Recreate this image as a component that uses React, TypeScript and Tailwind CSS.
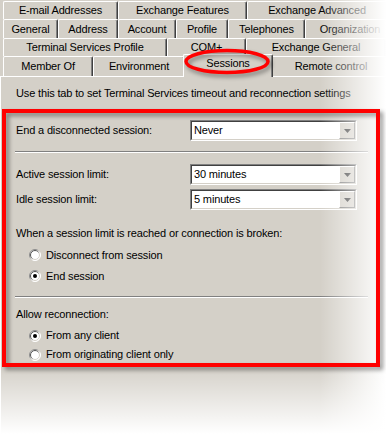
import React from "react";

function Tab({ w, label, selected }: { w: number; label: string; selected?: boolean }) {
  if (selected) {
    return (
      <div
        style={{ width: w }}
        className="relative z-[5] -mx-[2px] -mt-[2px] h-[23px] shrink-0 flex items-start justify-center pt-[2px] rounded-t-[2px] border-t border-l border-white border-r border-r-[#404040] bg-[#d4d0c8] shadow-[inset_-1px_0_0_#808080]"
      >
        {label}
      </div>
    );
  }
  return (
    <div
      style={{ width: w }}
      className="h-full shrink-0 flex items-center justify-center rounded-t-[2px] border-t border-l border-white border-r border-r-[#404040] bg-[#d4d0c8] shadow-[inset_-1px_0_0_#808080] whitespace-nowrap overflow-hidden"
    >
      {label}
    </div>
  );
}

function Dropdown({ value }: { value: string }) {
  return (
    <div className="w-[167px] h-[21px] border border-t-[#808080] border-l-[#808080] border-b-white border-r-white">
      <div className="h-full flex items-center bg-white border border-t-[#404040] border-l-[#404040] border-b-[#d4d0c8] border-r-[#d4d0c8]">
        <span className="flex-1 pl-[2px]">{value}</span>
        <div className="w-[16px] h-[17px] flex items-center justify-center bg-[#d4d0c8] border border-t-white border-l-white border-b-[#808080] border-r-[#808080]">
          <svg width="7" height="4" viewBox="0 0 7 4">
            <path d="M0 0h7L3.5 4z" fill="#333" />
          </svg>
        </div>
      </div>
    </div>
  );
}

function Radio({ checked, label }: { checked?: boolean; label: string }) {
  return (
    <div className="flex items-center h-full pl-[27px]">
      <svg width="12" height="12" viewBox="0 0 12 12" className="shrink-0">
        <defs>
          <linearGradient id="ro" x1="0" y1="0" x2="1" y2="1">
            <stop offset="0.35" stopColor="#8a8a8a" />
            <stop offset="0.65" stopColor="#ffffff" />
          </linearGradient>
          <linearGradient id="ri" x1="0" y1="0" x2="1" y2="1">
            <stop offset="0.35" stopColor="#505050" />
            <stop offset="0.65" stopColor="#d4d0c8" />
          </linearGradient>
        </defs>
        <circle cx="6" cy="6" r="5.5" fill="white" stroke="url(#ro)" strokeWidth="1" />
        <circle cx="6" cy="6" r="4.5" fill="white" stroke="url(#ri)" strokeWidth="1" />
        {checked && <circle cx="6" cy="6" r="2" fill="#000" />}
      </svg>
      <span className="ml-[5px]">{label}</span>
    </div>
  );
}

function Separator() {
  return <div className="ml-[13px] w-[353px] h-[2px] border-t border-[#808080] border-b border-b-white" />;
}

export default function App() {
  return (
    <div className="relative w-[386px] h-[434px] overflow-hidden bg-[#d4d0c8] text-[11px] leading-[13px] tracking-[-0.15px] text-black font-['Liberation_Sans',Arial,sans-serif]">
      {/* tab rows */}
      <div className="pt-[1px] pl-[3px]">
        <div className="flex h-[18px]">
          <Tab w={115} label="E-mail Addresses" />
          <Tab w={129} label="Exchange Features" />
          <Tab w={140} label="Exchange Advanced" />
        </div>
        <div className="flex h-[19px]">
          <Tab w={55} label="General" />
          <Tab w={60} label="Address" />
          <Tab w={58} label="Account" />
          <Tab w={52} label="Profile" />
          <Tab w={77} label="Telephones" />
          <Tab w={90} label="Organization" />
        </div>
        <div className="flex h-[18px]">
          <Tab w={164} label="Terminal Services Profile" />
          <Tab w={79} label="COM+" />
          <Tab w={140} label="Exchange General" />
        </div>
        <div className="flex h-[20px] items-start">
          <Tab w={90} label="Member Of" />
          <Tab w={92} label="Environment" />
          <Tab w={90} label="Sessions" selected />
          <Tab w={120} label="Remote control" />
        </div>
      </div>

      {/* tab page */}
      <div className="border-t border-l border-white h-[358px]">
        <p className="pl-[15px] pt-[10px] whitespace-nowrap">
          Use this tab to set Terminal Services timeout and reconnection settings
        </p>

        <div className="relative mt-[9px] ml-[1px] w-[378px] h-[258px] pt-[11px]">
          <div className="flex items-center h-[21px]">
            <span className="w-[188px] pl-[14px]">End a disconnected session:</span>
            <Dropdown value="Never" />
          </div>
          <div className="mt-[10px]">
            <Separator />
          </div>
          <div className="flex items-center h-[21px] mt-[11px]">
            <span className="w-[188px] pl-[14px]">Active session limit:</span>
            <Dropdown value="30 minutes" />
          </div>
          <div className="flex items-center h-[21px] mt-[4px]">
            <span className="w-[188px] pl-[14px]">Idle session limit:</span>
            <Dropdown value="5 minutes" />
          </div>
          <p className="mt-[17px] pl-[14px]">When a session limit is reached or connection is broken:</p>
          <div className="h-[20px] mt-[5px]">
            <Radio label="Disconnect from session" />
          </div>
          <div className="h-[20px] mt-[1px]">
            <Radio label="End session" checked />
          </div>
          <div className="mt-[10px]">
            <Separator />
          </div>
          <p className="mt-[10px] pl-[14px]">Allow reconnection:</p>
          <div className="h-[19px] mt-[5px]">
            <Radio label="From any client" checked />
          </div>
          <div className="h-[19px]">
            <Radio label="From originating client only" />
          </div>

          {/* red annotation rectangle */}
          <div className="absolute inset-0 z-20 border-4 border-[#ff0000] drop-shadow-[3px_3px_2px_rgba(0,0,0,0.4)]" />
        </div>
      </div>

      {/* fades */}
      <div className="absolute top-0 right-0 z-10 h-full w-[66px] bg-linear-to-r from-[#ffffff00] to-[#ffffff]" />
      <div className="absolute left-0 bottom-0 z-10 w-full h-[68px] bg-linear-to-b from-[#ffffff00] to-[#ffffff]" />

      {/* red ellipse annotation */}
      <svg
        width="100"
        height="36"
        viewBox="0 0 100 36"
        className="absolute left-[178px] top-[44px] z-20 drop-shadow-[2px_3px_2px_rgba(0,0,0,0.4)]"
      >
        <ellipse cx="49" cy="17.5" rx="41" ry="11" fill="none" stroke="#ff0000" strokeWidth="3.5" />
      </svg>
    </div>
  );
}
